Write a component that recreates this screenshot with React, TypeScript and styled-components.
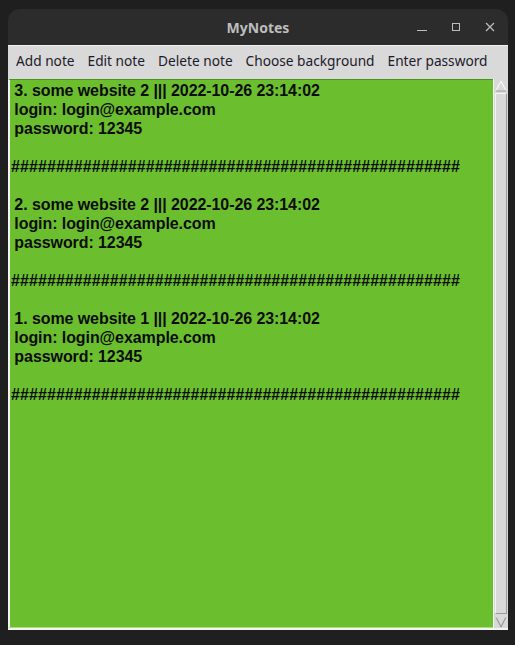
import styled, { createGlobalStyle } from "styled-components";

const GlobalStyle = createGlobalStyle`
    html, body {
        margin: 0;
        padding: 0;
        background: #1f1f1f;
        width: 515px;
        height: 645px;
        overflow: hidden;
    }
`;

const Desktop = styled.div`
    width: 515px;
    height: 645px;
    padding: 9px 7px 0 8px;
    box-sizing: border-box;
    background: #1f1f1f;
`;

const Window = styled.div`
    display: flex;
    flex-direction: column;
    width: 500px;
    height: 621px;
    background: #2c2c2c;
    border-radius: 12px 12px 0 0;
    overflow: hidden;
`;

const TitleBar = styled.div`
    position: relative;
    display: flex;
    align-items: center;
    justify-content: center;
    height: 36px;
    flex-shrink: 0;
    font-family: "Noto Sans", "Liberation Sans", sans-serif;
    font-weight: 700;
    font-size: 14px;
    color: #bdbdbd;
`;

const Controls = styled.div`
    position: absolute;
    right: 8px;
    top: 0;
    height: 36px;
    display: flex;
    align-items: center;
    gap: 14px;
`;

const ControlButton = styled.div`
    width: 20px;
    height: 20px;
    display: flex;
    align-items: center;
    justify-content: center;
`;

const MenuBar = styled.div`
    display: flex;
    align-items: center;
    height: 33px;
    flex-shrink: 0;
    background: #d9d9d9;
    border-top: 1px solid #f2f2f2;
    padding: 0 0 4px 1.5px;
    box-sizing: border-box;
`;

const MenuItem = styled.div`
    padding: 0 6.5px;
    font-family: "Noto Sans", "Liberation Sans", sans-serif;
    font-size: 13.7px;
    color: #1b1b2b;
    white-space: nowrap;
`;

const Body = styled.div`
    flex: 1;
    display: flex;
    background: #d9d9d9;
    padding: 1px 0 0 0;
    border-bottom: 2px solid #f4f4f4;
`;

const TextArea = styled.div`
    flex: 1;
    background: #6bbf2f;
    border-left: 2px solid #f4f4f4;
    border-top: 1px solid #4e8f22;
    border-bottom: 1px solid #a6e27a;
    padding: 1px 0 0 1px;
    font-family: "Liberation Sans", Arial, sans-serif;
    font-weight: 700;
    font-size: 16px;
    line-height: 19px;
    color: #0c0c0c;
    white-space: pre;
`;

const Line = styled.div`
    height: 19px;
`;

const HashLine = styled(Line)`
    letter-spacing: 0.08px;
`;

const TextLine = styled(Line)`
    margin-left: -1px;
    letter-spacing: -0.08px;
`;

const ScrollBar = styled.div`
    width: 14px;
    display: flex;
    flex-direction: column;
    background: #d9d9d9;
    border-left: 1px solid #f4f4f4;
`;

const Arrow = styled.div`
    height: 13px;
    display: flex;
    align-items: center;
    justify-content: center;
`;

const Trough = styled.div`
    flex: 1;
    margin: 1px 1px;
    border: 1px solid #f4f4f4;
    border-right-color: #9a9a9a;
    border-bottom-color: #9a9a9a;
    background: #d9d9d9;
`;

const notes = [
    { n: 3, site: "some website 2" },
    { n: 2, site: "some website 2" },
    { n: 1, site: "some website 1" },
];

const hashes = "#".repeat(50);

export default function App() {
    return (
        <>
            <GlobalStyle />
            <Desktop>
                <Window>
                    <TitleBar>
                        MyNotes
                        <Controls>
                            <ControlButton>
                                <svg width="12" height="12" viewBox="0 0 12 12">
                                    <line x1="1" y1="9.5" x2="11" y2="9.5" stroke="#bdbdbd" strokeWidth="1" />
                                </svg>
                            </ControlButton>
                            <ControlButton>
                                <svg width="12" height="12" viewBox="0 0 12 12">
                                    <rect x="2.5" y="2.5" width="7" height="7" fill="none" stroke="#bdbdbd" strokeWidth="1" />
                                </svg>
                            </ControlButton>
                            <ControlButton>
                                <svg width="12" height="12" viewBox="0 0 12 12">
                                    <path d="M2 2 L10 10 M10 2 L2 10" stroke="#bdbdbd" strokeWidth="1.2" />
                                </svg>
                            </ControlButton>
                        </Controls>
                    </TitleBar>
                    <MenuBar>
                        <MenuItem>Add note</MenuItem>
                        <MenuItem>Edit note</MenuItem>
                        <MenuItem>Delete note</MenuItem>
                        <MenuItem>Choose background</MenuItem>
                        <MenuItem>Enter password</MenuItem>
                    </MenuBar>
                    <Body>
                        <TextArea>
                            {notes.map((note) => (
                                <div key={note.n}>
                                    <TextLine>{` ${note.n}. ${note.site} ||| 2022-10-26 23:14:02`}</TextLine>
                                    <TextLine>{" login: login@example.com"}</TextLine>
                                    <TextLine>{" password: 12345"}</TextLine>
                                    <Line />
                                    <HashLine>{hashes}</HashLine>
                                    <Line />
                                </div>
                            ))}
                        </TextArea>
                        <ScrollBar>
                            <Arrow>
                                <svg width="12" height="12" viewBox="0 0 12 12">
                                    <path d="M6 1 L11 11 L1 11 Z" fill="#d9d9d9" stroke="#ffffff" strokeWidth="1" />
                                    <path d="M11 11 L1 11" stroke="#8a8a8a" strokeWidth="1" />
                                </svg>
                            </Arrow>
                            <Trough />
                            <Arrow>
                                <svg width="12" height="12" viewBox="0 0 12 12">
                                    <path d="M1 1 L11 1 L6 11 Z" fill="#d9d9d9" stroke="#8a8a8a" strokeWidth="1" />
                                    <path d="M1 1 L11 1" stroke="#ffffff" strokeWidth="1" />
                                </svg>
                            </Arrow>
                        </ScrollBar>
                    </Body>
                </Window>
            </Desktop>
        </>
    );
}
